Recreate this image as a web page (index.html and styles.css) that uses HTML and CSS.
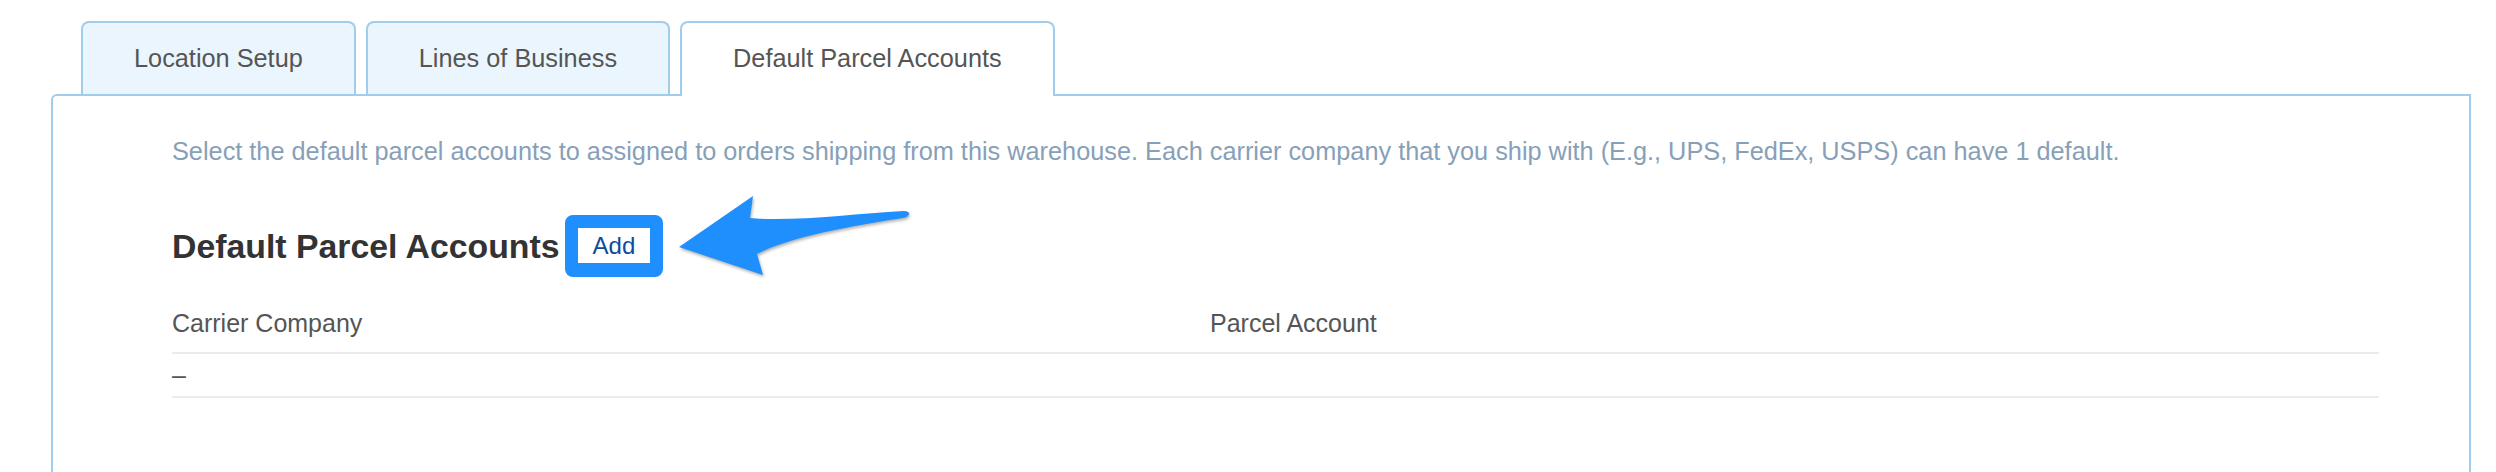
FILE: index.html
```html
<!DOCTYPE html>
<html lang="en">
<head>
<meta charset="utf-8">
<title>Default Parcel Accounts</title>
<link rel="stylesheet" href="styles.css">
</head>
<body>
<div class="page">
  <div class="tabs">
    <div class="tab">Location Setup</div>
    <div class="tab">Lines of Business</div>
    <div class="tab tab-active">Default Parcel Accounts</div>
  </div>
  <div class="panel">
    <p class="desc">Select the default parcel accounts to assigned to orders shipping from this warehouse. Each carrier company that you ship with (E.g., UPS, FedEx, USPS) can have 1 default.</p>
    <div class="heading-row">
      <h2 class="heading">Default Parcel Accounts</h2>
      <button class="add-btn" type="button">Add</button>
    </div>
    <div class="table">
      <div class="cell head">Carrier Company</div>
      <div class="cell head">Parcel Account</div>
      <div class="cell body">–</div>
      <div class="cell body"></div>
    </div>
  </div>
  <svg class="arrow" viewBox="670 185 250 100" width="250" height="100" aria-hidden="true">
    <path d="M679,247 L753,196 L750,218 C792,222 852,214 904,211 Q910,211.5 909,214.5 Q907,217.5 903,218 C852,226 792,236 757,254 L763,275 Z" fill="#1e8ffd"/>
  </svg>
</div>
</body>
</html>
```

FILE: styles.css
```css
* { box-sizing: border-box; }

html, body {
  margin: 0;
  padding: 0;
  background: #ffffff;
  overflow: hidden;
}

body {
  font-family: "Liberation Sans", Arial, Helvetica, sans-serif;
  color: #555555;
}

.page {
  position: relative;
  padding: 21px 25px 0 51px;
  height: 472px;
}

.tabs {
  display: flex;
  align-items: flex-end;
  gap: 10px;
  padding-left: 30px;
}

.tab {
  height: 73px;
  padding: 21px 51px 0;
  font-size: 25.3px;
  line-height: 29px;
  color: #555555;
  background: #eaf5fe;
  border: 2px solid #a0cdeb;
  border-bottom: none;
  border-radius: 8px 8px 0 0;
  white-space: nowrap;
}

.tab-active {
  height: 75px;
  margin-bottom: -2px;
  background: #ffffff;
  position: relative;
  z-index: 1;
}

.panel {
  border: 2px solid #a0cdeb;
  border-bottom: none;
  border-radius: 6px 0 0 0;
  height: 400px;
  padding: 40px 90px 0 119px;
}

.desc {
  margin: 0;
  font-size: 25.3px;
  line-height: 30px;
  color: #87a0b8;
  white-space: nowrap;
}

.heading-row {
  display: flex;
  align-items: center;
  gap: 5px;
  margin-top: 49px;
}

.heading {
  margin: 0;
  font-size: 33.8px;
  line-height: 38px;
  font-weight: bold;
  color: #333333;
}

.add-btn {
  font-family: "Liberation Sans", Arial, Helvetica, sans-serif;
  font-size: 24px;
  line-height: 35px;
  color: #0b4c9c;
  background: #ffffff;
  border: 13px solid #1e8ffd;
  border-bottom-width: 14px;
  border-radius: 8px;
  padding: 0 15px;
  margin: 0;
  height: 62px;
}

.table {
  display: grid;
  grid-template-columns: 1038px 1fr;
  margin-top: 20px;
  font-size: 25px;
  line-height: 29px;
  color: #555555;
}

.cell {
  border-bottom: 2px solid #ebebeb;
}

.cell.head {
  padding: 12px 0 14px;
}

.cell.body {
  padding: 7px 0 6px;
  min-height: 44px;
}

.arrow {
  position: absolute;
  left: 670px;
  top: 185px;
  filter: drop-shadow(1px 2px 1.5px rgba(0, 0, 0, 0.3));
}
```
